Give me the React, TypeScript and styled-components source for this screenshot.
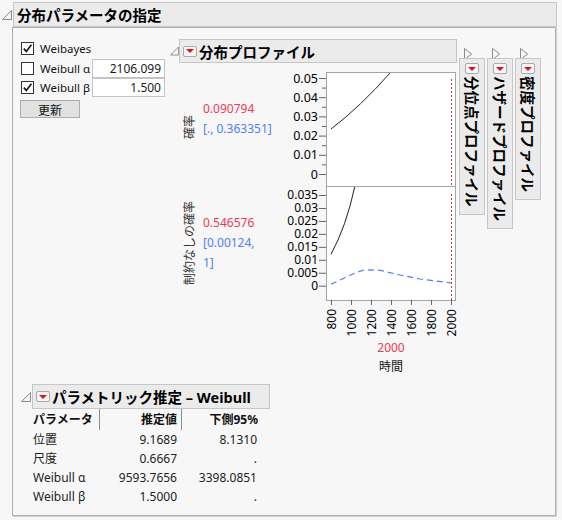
import React from 'react';
import styled, { createGlobalStyle } from 'styled-components';

/** Fonts */
const SANS = `"Noto Sans", "Noto Sans CJK JP", sans-serif`;

const GlobalStyle = createGlobalStyle`
  html, body {
    margin: 0;
    padding: 0;
    background: #f7f7f7;
  }
  body {
    font-family: ${SANS};
    color: #1a1a1a;
  }
`;

const Page = styled.div`
  width: 562px;
  height: 520px;
  box-sizing: border-box;
  padding: 2px 0 0 2px;
`;

/** Outline (collapsible report) parts */
const OutlineHead = styled.div`
  display: flex;
  align-items: center;
`;

const TwistySlot = styled.div<{ $w: number }>`
  width: ${(p) => p.$w}px;
  flex: none;
  display: flex;
  align-items: center;
`;

const HeadBox = styled.div<{ $w: number; $h?: number }>`
  box-sizing: border-box;
  width: ${(p) => p.$w}px;
  height: ${(p) => p.$h ?? 25}px;
  border: 1px solid #c6c6c6;
  background: #ebebeb;
  display: flex;
  align-items: center;
  gap: 2px;
  padding-left: 3px;
  font: bold 14.5px ${SANS};
  color: #000;
  white-space: nowrap;
`;

const MenuBtn = styled.span`
  flex: none;
  display: inline-flex;
  align-items: center;
  justify-content: center;
  width: 14px;
  height: 11px;
  box-sizing: border-box;
  border: 1px solid #a9a9a9;
  border-radius: 2px;
  background: #f6f6f6;

  &::after {
    content: '';
    border-left: 4px solid transparent;
    border-right: 4px solid transparent;
    border-top: 4px solid #d8141e;
  }
`;

const OutlineBody = styled.div`
  box-sizing: border-box;
  margin-left: 10px;
  width: 544px;
  height: 489px;
  border: 1px solid #b0b0b0;
  box-shadow: 1px 1px 0 #d2d2d2;
`;

const TopRow = styled.div`
  display: flex;
  align-items: flex-start;
  padding: 10px 0 0 7px;
`;

/** Parameter panel */
const ParamPanel = styled.div`
  width: 150px;
  flex: none;
  display: grid;
  grid-template-columns: 72px 73px;
  grid-template-rows: 21px 19px 19px auto;
  align-items: center;
`;

const CheckRow = styled.label<{ $wide?: boolean }>`
  display: flex;
  align-items: center;
  gap: 6px;
  padding-left: 1px;
  font-size: 11.5px;
  color: #111;
  grid-column: ${(p) => (p.$wide ? '1 / span 2' : 'auto')};
  white-space: nowrap;
`;

const Box = styled.span`
  width: 13px;
  height: 13px;
  box-sizing: border-box;
  border: 1px solid #333;
  background: #fff;
  display: flex;
  align-items: center;
  justify-content: center;
  flex: none;
`;

const NumField = styled.div`
  box-sizing: border-box;
  height: 19px;
  border: 1px solid #c3c3c3;
  background: #fff;
  text-align: right;
  padding-right: 3px;
  font-size: 12px;
  line-height: 17px;
`;

const UpdateButton = styled.button`
  grid-column: 1 / span 2;
  justify-self: start;
  margin-top: 3px;
  width: 60px;
  height: 18px;
  padding: 0;
  border: 1px solid #adadad;
  background: #e1e1e1;
  font: 12px ${SANS};
  color: #111;
`;

/** Profile */
const Profile = styled.div`
  width: 287px;
  flex: none;
  margin-top: 1px;
`;

const ChartBody = styled.div`
  margin-left: 9px;
  padding-top: 6px;
  display: grid;
  grid-template-columns: 21px 78px 180px;
  grid-template-rows: 117px 114px 39px 18px 20px;
`;

const AxisLabel = styled.div<{ $row: number }>`
  grid-column: 1;
  grid-row: ${(p) => p.$row};
  align-self: center;
  justify-self: center;
  writing-mode: vertical-rl;
  text-orientation: sideways;
  transform: rotate(180deg);
  font-size: 12px;
  line-height: 16px;
  color: #333;
  white-space: nowrap;
`;

const Values = styled.div<{ $row: number; $top: number }>`
  grid-column: 2;
  grid-row: ${(p) => p.$row};
  padding: ${(p) => p.$top}px 0 0 3px;
  font-size: 12px;
  line-height: 20px;
  white-space: nowrap;
`;

const Val = styled.div<{ $tone: 'red' | 'blue' }>`
  color: ${(p) => (p.$tone === 'red' ? '#ec3a55' : '#4f80f2')};
`;

const ChartSvg = styled.svg`
  grid-column: 3;
  grid-row: 1 / span 3;
  display: block;
  overflow: visible;
`;

const XCaption = styled.div<{ $row: number; $tone?: 'red' }>`
  grid-column: 3;
  grid-row: ${(p) => p.$row};
  margin-left: 48px;
  width: 130px;
  text-align: center;
  font-size: 12px;
  line-height: ${(p) => (p.$row === 4 ? 18 : 20)}px;
  color: ${(p) => (p.$tone === 'red' ? '#ec3a55' : '#111')};
`;

/** Collapsed side tabs */
const Tabs = styled.div`
  display: flex;
  gap: 2px;
  margin: 5px 0 0 2px;
`;

const TabCol = styled.div`
  display: flex;
  flex-direction: column;
  width: 26px;
`;

const TabTwisty = styled.div`
  height: 15px;
  padding-left: 5px;
`;

const TabBox = styled.div`
  box-sizing: border-box;
  width: 26px;
  border: 1px solid #c6c6c6;
  background: #ebebeb;
  display: flex;
  flex-direction: column;
  align-items: center;
  padding: 4px 0 7px;
  gap: 2px;
`;

const TabText = styled.div`
  writing-mode: vertical-rl;
  text-orientation: sideways;
  font: bold 14.5px ${SANS};
  line-height: 22px;
  color: #000;
  white-space: nowrap;
`;

/** Estimates */
const Estimates = styled.div`
  margin-top: 7px;
  padding-left: 8px;
`;

const EstTable = styled.div`
  margin-left: 12px;
  display: grid;
  grid-template-columns: 67px 82px 80px;
  font-size: 12px;
  color: #222;
`;

const HeadCell = styled.div<{ $right?: boolean; $sep?: boolean }>`
  height: 21px;
  line-height: 21px;
  font-weight: bold;
  color: #111;
  text-align: ${(p) => (p.$right ? 'right' : 'left')};
  padding-right: 4px;
  border-right: ${(p) => (p.$sep ? '1px solid #8c8c8c' : 'none')};
  white-space: nowrap;
`;

const Cell = styled.div<{ $right?: boolean }>`
  height: 19px;
  line-height: 19px;
  text-align: ${(p) => (p.$right ? 'right' : 'left')};
  padding-right: ${(p) => (p.$right ? 5 : 0)}px;
  white-space: nowrap;
`;

const OpenTwisty = () => (
  <svg width="10" height="10" viewBox="0 0 10 10">
    <polygon points="0.5,9.5 9.5,9.5 9.5,0.5" fill="#f4f4f4" stroke="#8a8a8a" />
  </svg>
);

const ClosedTwisty = () => (
  <svg width="8" height="12" viewBox="0 0 8 12">
    <polygon points="0.5,0.5 7.5,6 0.5,11.5" fill="#f7f7f7" stroke="#8a8a8a" />
  </svg>
);

const Check = ({ on }: { on: boolean }) => (
  <Box>
    {on && (
      <svg width="11" height="11" viewBox="0 0 11 11">
        <path d="M1.8,5.6 L4.3,8.4 L9.4,1.8" fill="none" stroke="#111" strokeWidth="1.6" />
      </svg>
    )}
  </Box>
);

const topTicks = [0, 0.01, 0.02, 0.03, 0.04, 0.05];
const botTicks = ['0', '0.005', '0.01', '0.015', '0.02', '0.025', '0.03', '0.035'];
const xTicks = [800, 1000, 1200, 1400, 1600, 1800, 2000];

const topY = (v: number) => 105 - v * 1920;
const botY = (v: number) => 216.7 - v * 2591;
const xPos = (t: number) => 53 + (t - 800) * 0.1;

const ProfileChart = () => (
  <ChartSvg width="180" height="270" viewBox="0 0 180 270" fontFamily={SANS}>
    <rect x="48.5" y="3.5" width="129" height="114" fill="#fff" stroke="#a3a3a3" />
    <rect x="48.5" y="117.5" width="129" height="114" fill="#fff" stroke="#a3a3a3" />

    {topTicks.map((v) => (
      <g key={`t${v}`}>
        <line x1="41" x2="48" y1={topY(v) + 0.5} y2={topY(v) + 0.5} stroke="#666" />
        <text x="40" y={topY(v) + 4.5} fontSize="12.5" textAnchor="end" fill="#000">
          {v === 0 ? '0' : v.toFixed(2)}
        </text>
      </g>
    ))}
    {topTicks.slice(0, 5).map((v) => (
      <line key={`m${v}`} x1="44" x2="48" y1={topY(v + 0.005) + 0.5} y2={topY(v + 0.005) + 0.5} stroke="#666" />
    ))}

    {botTicks.map((s) => (
      <g key={`b${s}`}>
        <line x1="41" x2="48" y1={botY(Number(s)) + 0.5} y2={botY(Number(s)) + 0.5} stroke="#666" />
        <text x="40" y={botY(Number(s)) + 4.3} fontSize="12" textAnchor="end" fill="#000">
          {s}
        </text>
      </g>
    ))}

    {xTicks.map((t) => (
      <g key={`x${t}`}>
        <line x1={xPos(t) + 0.5} x2={xPos(t) + 0.5} y1="231" y2="236" stroke="#666" />
        <text
          x={xPos(t) + 4.5}
          y="240"
          fontSize="12"
          textAnchor="end"
          fill="#000"
          transform={`rotate(-90 ${xPos(t) + 4.5} 240)`}
        >
          {t}
        </text>
      </g>
    ))}

    <path d="M53,60 Q82.5,37.5 112,4" fill="none" stroke="#222" strokeWidth="1" />
    <path d="M53,185.3 Q68,158 76.7,118" fill="none" stroke="#222" strokeWidth="1" />
    <polyline
      points="53,215.3 77,204 87,200.7 102,201.3 122,206 142,210 173,214"
      fill="none"
      stroke="#4a7ef5"
      strokeWidth="1.2"
      strokeDasharray="6 4"
    />
    <line x1="173.5" x2="173.5" y1="10" y2="116" stroke="#e0303f" strokeDasharray="2 2" />
    <line x1="173.5" x2="173.5" y1="125" y2="231" stroke="#e0303f" strokeDasharray="2 2" />
  </ChartSvg>
);

const sideTabs = ['分位点プロファイル', 'ハザードプロファイル', '密度プロファイル'];

const rows = [
  ['位置', '9.1689', '8.1310'],
  ['尺度', '0.6667', '.'],
  ['Weibull α', '9593.7656', '3398.0851'],
  ['Weibull β', '1.5000', '.'],
];

const App: React.FC = () => {
  return (
    <>
      <GlobalStyle />
      <Page>
        <OutlineHead>
          <TwistySlot $w={11}>
            <OpenTwisty />
          </TwistySlot>
          <HeadBox $w={544}>分布パラメータの指定</HeadBox>
        </OutlineHead>

        <OutlineBody>
          <TopRow>
            <ParamPanel>
              <CheckRow $wide>
                <Check on />
                Weibayes
              </CheckRow>
              <CheckRow>
                <Check on={false} />
                Weibull α
              </CheckRow>
              <NumField>2106.099</NumField>
              <CheckRow>
                <Check on />
                Weibull β
              </CheckRow>
              <NumField>1.500</NumField>
              <UpdateButton>更新</UpdateButton>
            </ParamPanel>

            <Profile>
              <OutlineHead>
                <TwistySlot $w={9}>
                  <OpenTwisty />
                </TwistySlot>
                <HeadBox $w={278} $h={24}>
                  <MenuBtn />
                  分布プロファイル
                </HeadBox>
              </OutlineHead>
              <ChartBody>
                <AxisLabel $row={1}>確率</AxisLabel>
                <Values $row={1} $top={30}>
                  <Val $tone="red">0.090794</Val>
                  <Val $tone="blue">[., 0.363351]</Val>
                </Values>
                <AxisLabel $row={2}>制約なしの確率</AxisLabel>
                <Values $row={2} $top={27}>
                  <Val $tone="red">0.546576</Val>
                  <Val $tone="blue">[0.00124,</Val>
                  <Val $tone="blue">1]</Val>
                </Values>
                <ProfileChart />
                <XCaption $row={4} $tone="red">
                  2000
                </XCaption>
                <XCaption $row={5}>時間</XCaption>
              </ChartBody>
            </Profile>

            <Tabs>
              {sideTabs.map((label) => (
                <TabCol key={label}>
                  <TabTwisty>
                    <ClosedTwisty />
                  </TabTwisty>
                  <TabBox>
                    <MenuBtn />
                    <TabText>{label}</TabText>
                  </TabBox>
                </TabCol>
              ))}
            </Tabs>
          </TopRow>

          <Estimates>
            <OutlineHead>
              <TwistySlot $w={11}>
                <OpenTwisty />
              </TwistySlot>
              <HeadBox $w={238}>
                <MenuBtn />
                パラメトリック推定 – Weibull
              </HeadBox>
            </OutlineHead>
            <EstTable>
              <HeadCell $sep>パラメータ</HeadCell>
              <HeadCell $sep $right>
                推定値
              </HeadCell>
              <HeadCell $right>下側95%</HeadCell>
              {rows.map((r) => (
                <React.Fragment key={r[0]}>
                  <Cell>{r[0]}</Cell>
                  <Cell $right>{r[1]}</Cell>
                  <Cell $right>{r[2]}</Cell>
                </React.Fragment>
              ))}
            </EstTable>
          </Estimates>
        </OutlineBody>
      </Page>
    </>
  );
};

export default App;
